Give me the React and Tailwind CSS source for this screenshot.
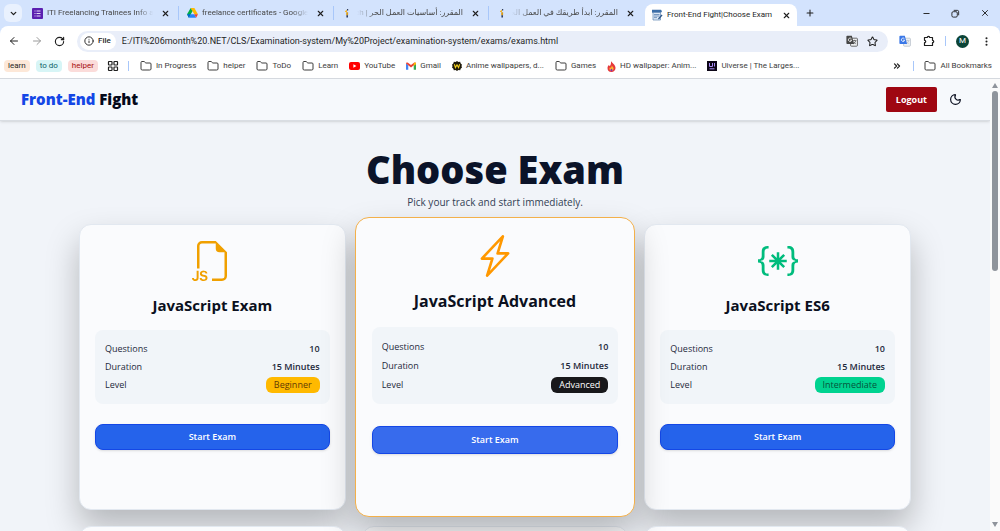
import React from "react";
import {
  ArrowLeft,
  ArrowRight,
  ChevronDown,
  ChevronsRight,
  Folder,
  Info,
  LayoutGrid,
  Minus,
  Moon,
  MoreVertical,
  Plus,
  RotateCw,
  Star,
  X,
} from "lucide-react";
import { BsBracesAsterisk, BsFiletypeJs, BsLightningCharge } from "react-icons/bs";

const FormsIcon = () => (
  <svg viewBox="0 0 11 11" className="size-[11px] shrink-0">
    <rect width="11" height="11" rx="1" fill="#5b1fb0" />
    <path d="M2.5 3h1M2.5 5.5h1M2.5 8h1M4.5 3h4M4.5 5.5h4M4.5 8h4" stroke="#e6dcf7" strokeWidth="1.1" />
  </svg>
);

const DriveIcon = () => (
  <svg viewBox="0 0 12 11" className="h-[10px] w-[11px] shrink-0">
    <path d="M4 0h4L6 3.6z" fill="#188038" />
    <path d="M4 0 0 7l2 3.6L6 3.6z" fill="#00ac47" />
    <path d="M8 0H4l4 7h4z" fill="#ffba00" />
    <path d="M2 10.6 4 7h4l2 3.6z" fill="#2684fc" />
    <path d="M0 7h4l-2 3.6z" fill="#0066da" />
    <path d="M8 7h4l-2 3.6z" fill="#ea4335" />
  </svg>
);

const CourseIcon = () => (
  <svg viewBox="0 0 11 11" className="size-[11px] shrink-0">
    <path d="M3 3.2 5 1.5v2.4H3z" fill="#f2b52a" />
    <path d="M4.2 4.2h1.9v3.2H4.2z" fill="#d79a1c" />
    <path d="M4.4 7.2h1.6v2.4H4.4z" fill="#2f3e63" />
    <path d="M5 1h1.2v1.4H5z" fill="#2f3e63" />
  </svg>
);

const ExamIcon = () => (
  <svg viewBox="0 0 12 12" className="size-[12px] shrink-0">
    <path d="M1 .8h9l1 1.5-1 1.5H1z" fill="#3c6ea8" />
    <path d="M2 3.5h7.5V11H2z" fill="#dbe7f5" stroke="#5d84b3" strokeWidth=".7" />
    <path d="M3 5.5h5.5M3 7h5.5M3 8.6h3" stroke="#5d84b3" strokeWidth=".8" />
    <path d="m7 9.6 3.6-4 .9.8-3.6 4z" fill="#2c5688" />
  </svg>
);

const TranslateIcon = ({ front, back }) => (
  <svg viewBox="0 0 12 12" className="size-[12px] shrink-0">
    <rect x="4.6" y="3.2" width="6.8" height="8" rx=".8" fill="#f1f3f4" stroke={back} strokeWidth=".8" />
    <path d="M6.8 5.6h3.6M8.6 4.8v.8M9.8 5.8c-.4 1.5-1.4 2.5-2.4 3M7.5 6.8c.5 1 1.3 1.6 2.3 2" stroke={back} strokeWidth=".7" fill="none" />
    <path d="M1.2.8h4.6l2.3 8.2H1.2a.8.8 0 0 1-.8-.8V1.600a.8.8 0 0 1 .8-.8z" fill={front} />
    <path d="M5.400 3.700a1.700 1.700 0 1 0 .3 1.500H4" stroke="#fff" strokeWidth=".8" fill="none" />
  </svg>
);

const PuzzleIcon = () => (
  <svg viewBox="0 0 12 12" className="size-[12px]" fill="none" stroke="#1f1f1f" strokeWidth="1.2" strokeLinejoin="round">
    <path d="M1.500 2.500h2.800a1.200 1.200 0 0 1 2.400 0h2.800v2.800a1.200 1.200 0 0 1 0 2.400v2.800h-8V7.700a1.200 1.200 0 0 0 0-2.400z" />
  </svg>
);

const YouTubeIcon = () => (
  <svg viewBox="0 0 11 8" className="h-2 w-[11px] shrink-0">
    <rect width="11" height="8" rx="2" fill="#f00" />
    <path d="m4.4 2.2 3 1.8-3 1.8z" fill="#fff" />
  </svg>
);

const GmailIcon = () => (
  <svg viewBox="0 0 11 8" className="h-2 w-[10px] shrink-0">
    <path d="M0 1.2V8h2.5V3z" fill="#4285f4" />
    <path d="M11 1.2V8H8.5V3z" fill="#34a853" />
    <path d="M0 1.2C0 0 1.3-.3 2.2.4l3.3 2.5L8.8.4C9.7-.3 11 0 11 1.2L5.5 5.7z" fill="#ea4335" />
    <path d="M8.5.7C9.7-.4 11 0 11 1.2v.9L8.5 4z" fill="#fbbc04" />
  </svg>
);

const WallpaperIcon = () => (
  <svg viewBox="0 0 11 11" className="size-[10px] shrink-0">
    <path d="M5.5 0 7 1l2-.2.4 1.8L11 4l-.6 1.5L11 7.2 9.5 8.5 9 10.2 7 10l-1.5 1L4 10l-2 .2-.5-1.7L0 7.2l.6-1.7L0 4l1.6-1.4L2 .8 4 1z" fill="#1c1708" />
    <path d="m2.6 3.6 1.2 3.6 1.7-3 1.7 3 1.2-3.6" stroke="#f5d21f" strokeWidth="1.2" fill="none" />
  </svg>
);

const FlameIcon = () => (
  <svg viewBox="0 0 9 11" className="h-[11px] w-[9px] shrink-0">
    <path d="M4 0c1 2 4.5 3.5 4.5 6.8A4 4 0 0 1 4.500 11 4 4 0 0 1 .5 7c0-1.500.7-2.500 1.500-3l.6 1.300C3.800 4 4.200 2 4 0z" fill="#e5383b" />
    <path d="M4.7 4.500c.8 1 1.900 1.700 1.900 3.300a2.100 2.100 0 0 1-4.200 0c0-.8.4-1.300.8-1.600l.5.8c.7-.6 1-1.500 1-2.500z" fill="#ffb52e" />
    <path d="M4.5 7.500c.5.500 1 1 1 1.700a1 1 0 0 1-2 0c0-.7.6-1.100 1-1.700z" fill="#7b2cbf" />
  </svg>
);

const UiverseIcon = () => (
  <svg viewBox="0 0 10 10" className="size-[10px] shrink-0">
    <rect width="10" height="10" fill="#0d0717" />
    <path d="M2.5 2v3.500h3V2M7.500 2v3.500M2.500 7.800h5" stroke="#a98bf5" strokeWidth="1" fill="none" />
  </svg>
);

const GroupsIcon = () => <LayoutGrid className="size-3 shrink-0 text-[#1f1f1f]" strokeWidth={2.4} />;
const FolderIcon = () => <Folder className="size-3 shrink-0 text-[#3c3c3c]" strokeWidth={2} />;

const tabs = [
  { title: "ITI Freelancing Trainees Info and", icon: FormsIcon },
  { title: "freelance certificates - Google D", icon: DriveIcon },
  { title: "المقرر: أساسيات العمل الحر | Tech", icon: CourseIcon, rtl: true },
  { title: "المقرر: ابدأ طريقك في العمل الحر", icon: CourseIcon, rtl: true },
];

const bookmarks = [
  { label: "In Progress", icon: FolderIcon },
  { label: "helper", icon: FolderIcon },
  { label: "ToDo", icon: FolderIcon },
  { label: "Learn", icon: FolderIcon },
  { label: "YouTube", icon: YouTubeIcon },
  { label: "Gmail", icon: GmailIcon },
  { label: "Anime wallpapers, d...", icon: WallpaperIcon },
  { label: "Games", icon: FolderIcon },
  { label: "HD wallpaper: Anim...", icon: FlameIcon },
  { label: "Uiverse | The Larges...", icon: UiverseIcon },
];

const exams = [
  { title: "JavaScript Exam", level: "Beginner", icon: BsFiletypeJs, iconClass: "text-[#f0a000]", badge: "bg-[#ffb900] text-[#5f3a05]" },
  { title: "JavaScript Advanced", level: "Advanced", icon: BsLightningCharge, iconClass: "text-[#ff9800]", badge: "bg-[#18181b] text-white", active: true },
  { title: "JavaScript ES6", level: "Intermediate", icon: BsBracesAsterisk, iconClass: "text-[#00bc7d]", badge: "bg-[#00d390] text-[#06543c]" },
];

function Tab({ title, icon: Icon, rtl }) {
  return (
    <div className="flex min-w-0 basis-[155px] items-center gap-1 border-r border-[#a8c7fa] px-2">
      <Icon />
      <span
        dir={rtl ? "rtl" : "ltr"}
        className={`min-w-0 flex-1 overflow-hidden whitespace-nowrap text-[#474747] ${
          rtl
            ? "[mask-image:linear-gradient(to_left,black_82%,transparent)]"
            : "[mask-image:linear-gradient(to_right,black_85%,transparent)]"
        }`}
      >
        {title}
      </span>
      <button aria-label="Close tab" className="ml-1"><X className="size-[9px] text-[#1f1f1f]" strokeWidth={3} /></button>
    </div>
  );
}

function BrowserChrome() {
  return (
    <div className="shrink-0 bg-[#d3e3fd] font-[Roboto,'DejaVu_Sans',sans-serif] text-[8px] leading-3 text-[#1f1f1f]">
      <div className="flex h-[26px] pl-1">
        <button aria-label="Search tabs" className="mr-[2px] mt-1 flex size-[18px] shrink-0 items-center justify-center rounded-md bg-[#e9f1fe]">
          <ChevronDown className="size-[9px]" strokeWidth={3.5} />
        </button>
        <div className="flex min-w-0 pt-[6px] [&>div]:h-[14px] [&>div:last-child]:border-transparent">
          {tabs.map((tab) => <Tab key={tab.title} {...tab} />)}
        </div>
        <div className="ml-px mt-1 flex min-w-0 basis-[152px] items-center gap-1 rounded-t-lg bg-white px-[6px]">
          <ExamIcon />
          <span className="min-w-0 flex-1 overflow-hidden whitespace-nowrap">Front-End Fight|Choose Exam</span>
          <button aria-label="Close tab"><X className="size-[9px]" strokeWidth={3} /></button>
        </div>
        <button aria-label="New tab" className="px-2"><Plus className="size-[10px]" strokeWidth={2.5} /></button>
        <div className="ml-auto flex items-center gap-5 pr-[10px]">
          <button aria-label="Minimize"><Minus className="size-[9px]" strokeWidth={2.5} /></button>
          <button aria-label="Restore">
            <svg viewBox="0 0 10 10" className="size-[9px]" fill="none" stroke="#1f1f1f">
              <rect x="1" y="3" width="6" height="6" rx="1.5" />
              <path d="M3 1.5h4A1.5 1.5 0 0 1 8.5 3v4" />
            </svg>
          </button>
          <button aria-label="Close window"><X className="size-[10px]" strokeWidth={2.2} /></button>
        </div>
      </div>

      <div className="rounded-t-lg border-b border-[#d5d9df] bg-white">
        <div className="flex h-[30px] items-center px-2">
          <div className="flex gap-[11px]">
            <button aria-label="Back"><ArrowLeft className="size-3" strokeWidth={2} /></button>
            <button aria-label="Forward"><ArrowRight className="size-3 text-[#9a9a9a]" strokeWidth={2} /></button>
            <button aria-label="Reload"><RotateCw className="size-[11px]" strokeWidth={2.5} /></button>
          </div>
          <div className="ml-3 flex h-[21px] flex-1 items-center rounded-full bg-[#e9eef9] pl-[3px] pr-[10px]">
            <span className="mr-[6px] flex h-[17px] items-center gap-1 rounded-full bg-white pl-1 pr-[5px] font-medium">
              <Info className="size-[10px]" strokeWidth={2.2} />
              File
            </span>
            <input
              aria-label="Address"
              readOnly
              className="min-w-0 flex-1 bg-transparent text-[9px] outline-none"
              value="E:/ITI%206month%20.NET/CLS/Examination-system/My%20Project/examination-system/exams/exams.html"
            />
            <div className="flex items-center gap-[9px]">
              <button aria-label="Translate page"><TranslateIcon front="#474747" back="#474747" /></button>
              <button aria-label="Bookmark page"><Star className="size-[11px]" strokeWidth={2.2} /></button>
            </div>
          </div>
          <div className="flex items-center pl-[11px]">
            <button aria-label="Translate extension" className="mr-3"><TranslateIcon front="#3b78e7" back="#b8bfc9" /></button>
            <button aria-label="Extensions" className="mr-[10px]"><PuzzleIcon /></button>
            <span className="h-[10px] w-px bg-[#a8c7fa]" />
            <button aria-label="Profile" className="ml-[10px] mr-3 flex size-[13px] items-center justify-center rounded-full bg-[#0b4437] text-[8px] text-white">M</button>
            <button aria-label="Menu"><MoreVertical className="size-[11px]" strokeWidth={2.5} /></button>
          </div>
        </div>

        <div className="flex h-[22px] items-center pb-[2px] pl-1 pr-2">
          <div className="flex items-center gap-[6px]">
            <a href="#learn" className="rounded bg-[#fde8d8] px-1">learn</a>
            <a href="#todo" className="rounded bg-[#d7f5f6] px-1 text-[#0b5f66]">to do</a>
            <a href="#helper" className="rounded bg-[#fbdcda] px-1 text-[#a50e0e]">helper</a>
          </div>
          <button aria-label="Tab groups" className="mx-[9px]"><GroupsIcon /></button>
          <span className="h-[10px] w-px bg-[#a8c7fa]" />
          <nav className="flex min-w-0 flex-1 items-center gap-[11px] overflow-hidden pl-[11px] text-[#3c3c3c]">
            {bookmarks.map(({ label, icon: Icon }) => (
              <a key={label} href="#bookmark" className="flex items-center gap-1 whitespace-nowrap">
                <Icon />
                {label}
              </a>
            ))}
          </nav>
          <button aria-label="More bookmarks" className="mr-[11px]"><ChevronsRight className="size-[10px]" strokeWidth={3} /></button>
          <span className="mr-[10px] h-[10px] w-px bg-[#a8c7fa]" />
          <a href="#all" className="flex items-center gap-1 whitespace-nowrap text-[#3c3c3c]">
            <FolderIcon />
            All Bookmarks
          </a>
        </div>
      </div>
    </div>
  );
}

function ExamCard({ title, level, icon: Icon, iconClass, badge, active }) {
  return (
    <article
      className={`flex flex-col items-center border bg-[#fafbfd] shadow-[0_17px_33px_rgba(0,0,0,0.25)] ${
        active
          ? "z-10 -mx-[7px] -my-[7px] min-h-[300px] rounded-[14px] border-[#f3b04a] px-4 pt-[17px]"
          : "min-h-[286px] rounded-xl border-[#e2e8f0] px-[15px] pt-4"
      }`}
    >
      <Icon className={`${active ? "size-[42px]" : "size-10"} ${iconClass}`} />
      <h2 className={`mt-3 leading-6 font-bold text-[#0b1020] ${active ? "mb-[14px] text-base" : "mb-[13px] text-[15px]"}`}>{title}</h2>
      <dl
        className={`w-full rounded-lg bg-[#f1f5f9] px-[10px] py-[10px] text-[9px] text-[#1e293b] ${
          active ? "leading-[19px]" : "leading-[18px]"
        }`}
      >
        <div className="flex justify-between">
          <dt>Questions</dt>
          <dd className="font-semibold">10</dd>
        </div>
        <div className="flex justify-between">
          <dt>Duration</dt>
          <dd className="font-semibold">15 Minutes</dd>
        </div>
        <div className="flex items-center justify-between">
          <dt>Level</dt>
          <dd className={`rounded-md px-2 leading-4 ${badge}`}>{level}</dd>
        </div>
      </dl>
      <button
        className={`w-full rounded-lg border border-[#1447e6] text-[9px] font-semibold text-white shadow-sm ${
          active ? "mt-[22px] h-7 bg-[#376bed]" : "mt-5 h-[26px] bg-[#2563eb]"
        }`}
      >
        Start Exam
      </button>
    </article>
  );
}

export default function App() {
  return (
    <div className="flex h-screen flex-col overflow-hidden font-['Open_Sans','Noto_Sans','DejaVu_Sans',sans-serif]">
      <BrowserChrome />
      <div className="flex min-h-0 flex-1 bg-[#f1f4f9]">
        <div className="min-w-0 flex-1 overflow-hidden">
          <header className="flex h-[42px] items-center justify-between border-b border-[#d9dde3] bg-[#f6f9fc] pl-[21px] pr-7 shadow-sm">
            <a href="#home" className="text-[15px] font-extrabold text-[#050a1a]">
              <span className="text-[#1447e6]">Front-End</span> Fight
            </a>
            <div className="flex items-center gap-3">
              <button className="h-[25px] rounded-xs bg-[#9f0712] px-[10px] text-[9px] font-bold text-white">Logout</button>
              <button aria-label="Toggle dark mode"><Moon className="size-[13px] text-[#0b1020]" strokeWidth={2.2} /></button>
            </div>
          </header>

          <main className="px-[79px] pt-[23px]">
            <h1 className="text-center text-[38px] leading-[50px] font-extrabold text-[#0b1329]">Choose Exam</h1>
            <p className="mb-[14px] text-center text-[10px] leading-4 text-[#334155]">Pick your track and start immediately.</p>
            <section className="grid grid-cols-3 gap-4">
              {exams.map((exam) => <ExamCard key={exam.title} {...exam} />)}
              {[1, 2, 3].map((n) => (
                <article key={n} className="min-h-[286px] rounded-xl border border-[#e2e8f0] bg-[#fafbfd]" />
              ))}
            </section>
          </main>
        </div>

        {/* page scrollbar */}
        <div className="flex w-[10px] shrink-0 flex-col items-center bg-[#fafafa] py-1">
          <span className="border-x-[3px] border-b-[5px] border-x-transparent border-b-[#8f949b]" />
          <span className="mt-[3px] h-[180px] w-[6px] rounded-full bg-[#8f949b]" />
          <span className="mt-auto border-x-[3px] border-t-[5px] border-x-transparent border-t-[#8f949b]" />
        </div>
      </div>
    </div>
  );
}
